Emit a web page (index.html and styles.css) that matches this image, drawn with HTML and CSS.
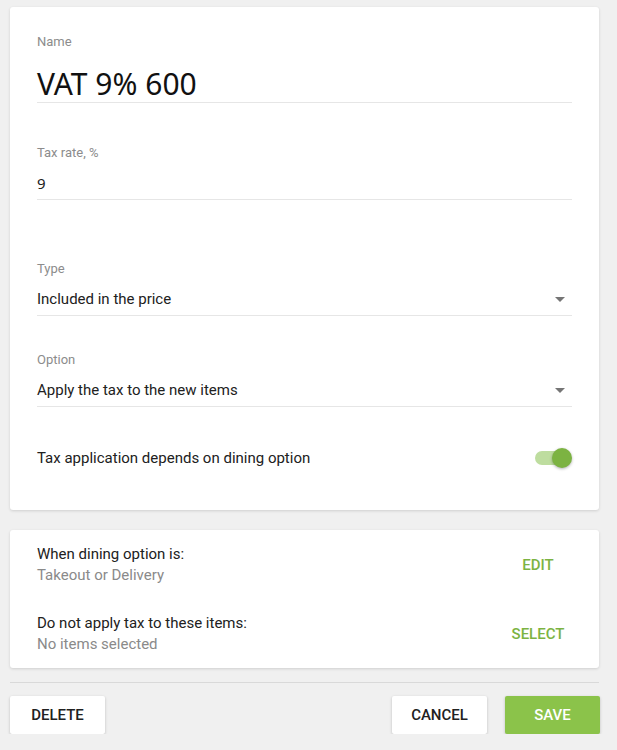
FILE: index.html
```html
<!DOCTYPE html>
<html lang="en">

<head>
    <meta charset="UTF-8">
    <meta name="viewport" content="width=device-width, initial-scale=1.0">
    <title>Edit tax</title>
    <link rel="stylesheet" href="styles.css">
</head>

<body>
    <div class="page">
        <div class="card card-main">
            <div class="field field-name">
                <div class="field-label">Name</div>
                <div class="field-value name-value">VAT 9% 600</div>
            </div>

            <div class="field field-rate">
                <div class="field-label">Tax rate, %</div>
                <div class="field-value rate-value">9</div>
            </div>

            <div class="field field-type">
                <div class="field-label">Type</div>
                <div class="field-value select-value">
                    <span>Included in the price</span>
                    <span class="caret"></span>
                </div>
            </div>

            <div class="field field-option">
                <div class="field-label">Option</div>
                <div class="field-value select-value">
                    <span>Apply the tax to the new items</span>
                    <span class="caret"></span>
                </div>
            </div>

            <div class="toggle-row">
                <span>Tax application depends on dining option</span>
                <span class="switch">
                    <span class="switch-track"></span>
                    <span class="switch-knob"></span>
                </span>
            </div>
        </div>

        <div class="card card-rules">
            <div class="rule-row">
                <div class="rule-text">
                    <div class="rule-title">When dining option is:</div>
                    <div class="rule-sub">Takeout or Delivery</div>
                </div>
                <button class="flat-btn">Edit</button>
            </div>
            <div class="rule-row">
                <div class="rule-text">
                    <div class="rule-title">Do not apply tax to these items:</div>
                    <div class="rule-sub">No items selected</div>
                </div>
                <button class="flat-btn">Select</button>
            </div>
        </div>

        <div class="divider"></div>

        <div class="actions">
            <button class="btn">Delete</button>
            <div class="actions-right">
                <button class="btn">Cancel</button>
                <button class="btn btn-save">Save</button>
            </div>
        </div>
    </div>
</body>

</html>
```

FILE: styles.css
```css
body {
    margin: 0;
    background: #f0f0f0;
    font-family: Roboto, "Liberation Sans", sans-serif;
    color: #212121;
}

.page {
    width: 589px;
    margin-left: 10px;
    padding-top: 7px;
}

.card {
    background: #fff;
    border-radius: 3px;
    box-shadow: 0 1px 3px rgba(0, 0, 0, 0.14);
}

.card-main {
    padding: 27px 27px 41px 27px;
}

/* Form fields */
.field-label {
    font-size: 13px;
    line-height: 16px;
    color: #8c8c8c;
}

.field-value {
    font-size: 15px;
    line-height: 22px;
    padding-bottom: 5px;
    margin-top: 11px;
    border-bottom: 1px solid #e6e6e6;
}

.name-value {
    font-family: "Noto Sans", "Open Sans", sans-serif;
    font-size: 30px;
    line-height: 36px;
    margin-top: 16px;
    padding-bottom: 0;
    color: #111;
}

.rate-value {
    font-family: "Noto Sans", "Open Sans", sans-serif;
    font-size: 15px;
}

.field-rate {
    margin-top: 42px;
}

.field-type {
    margin-top: 61px;
}

.field-option {
    margin-top: 36px;
}

.select-value {
    display: flex;
    justify-content: space-between;
    align-items: center;
}

.caret {
    width: 0;
    height: 0;
    margin-right: 7px;
    border-left: 5px solid transparent;
    border-right: 5px solid transparent;
    border-top: 5px solid #757575;
}

/* Switch */
.toggle-row {
    margin-top: 40px;
    display: flex;
    justify-content: space-between;
    align-items: center;
    font-size: 15px;
    line-height: 22px;
}

.switch {
    position: relative;
    width: 37px;
    height: 22px;
}

.switch-track {
    position: absolute;
    left: 0;
    top: 4px;
    width: 31px;
    height: 14px;
    border-radius: 7px;
    background: #bedd9f;
}

.switch-knob {
    position: absolute;
    right: 0;
    top: 1px;
    width: 20px;
    height: 20px;
    border-radius: 50%;
    background: #7cb342;
    box-shadow: 0 1px 3px rgba(0, 0, 0, 0.3);
}

/* Dining option rules */
.card-rules {
    margin-top: 20px;
    padding: 14px 17px 13px 27px;
}

.rule-row {
    display: flex;
    justify-content: space-between;
    align-items: center;
}

.rule-row + .rule-row {
    margin-top: 27px;
}

.rule-title,
.rule-sub {
    font-size: 15px;
    line-height: 21px;
}

.rule-sub {
    color: #8a8a8a;
}

.flat-btn {
    min-width: 88px;
    padding: 0 16px;
    height: 36px;
    border: none;
    background: none;
    font-family: inherit;
    font-size: 15px;
    font-weight: 500;
    text-transform: uppercase;
    color: #7cb342;
}

.divider {
    margin-top: 14px;
    height: 1px;
    background: #d9d9d9;
}

/* Bottom buttons */
.actions {
    margin-top: 13px;
    display: flex;
    justify-content: space-between;
}

.actions-right {
    display: flex;
    gap: 18px;
    margin-right: -1px;
}

.btn {
    width: 95px;
    height: 38px;
    border: none;
    border-radius: 2px;
    background: #fff;
    box-shadow: 0 1px 3px rgba(0, 0, 0, 0.22);
    font-family: inherit;
    font-size: 15px;
    font-weight: 500;
    text-transform: uppercase;
    color: #212121;
}

.btn-save {
    background: #8bc34a;
    color: #fff;
}
```
